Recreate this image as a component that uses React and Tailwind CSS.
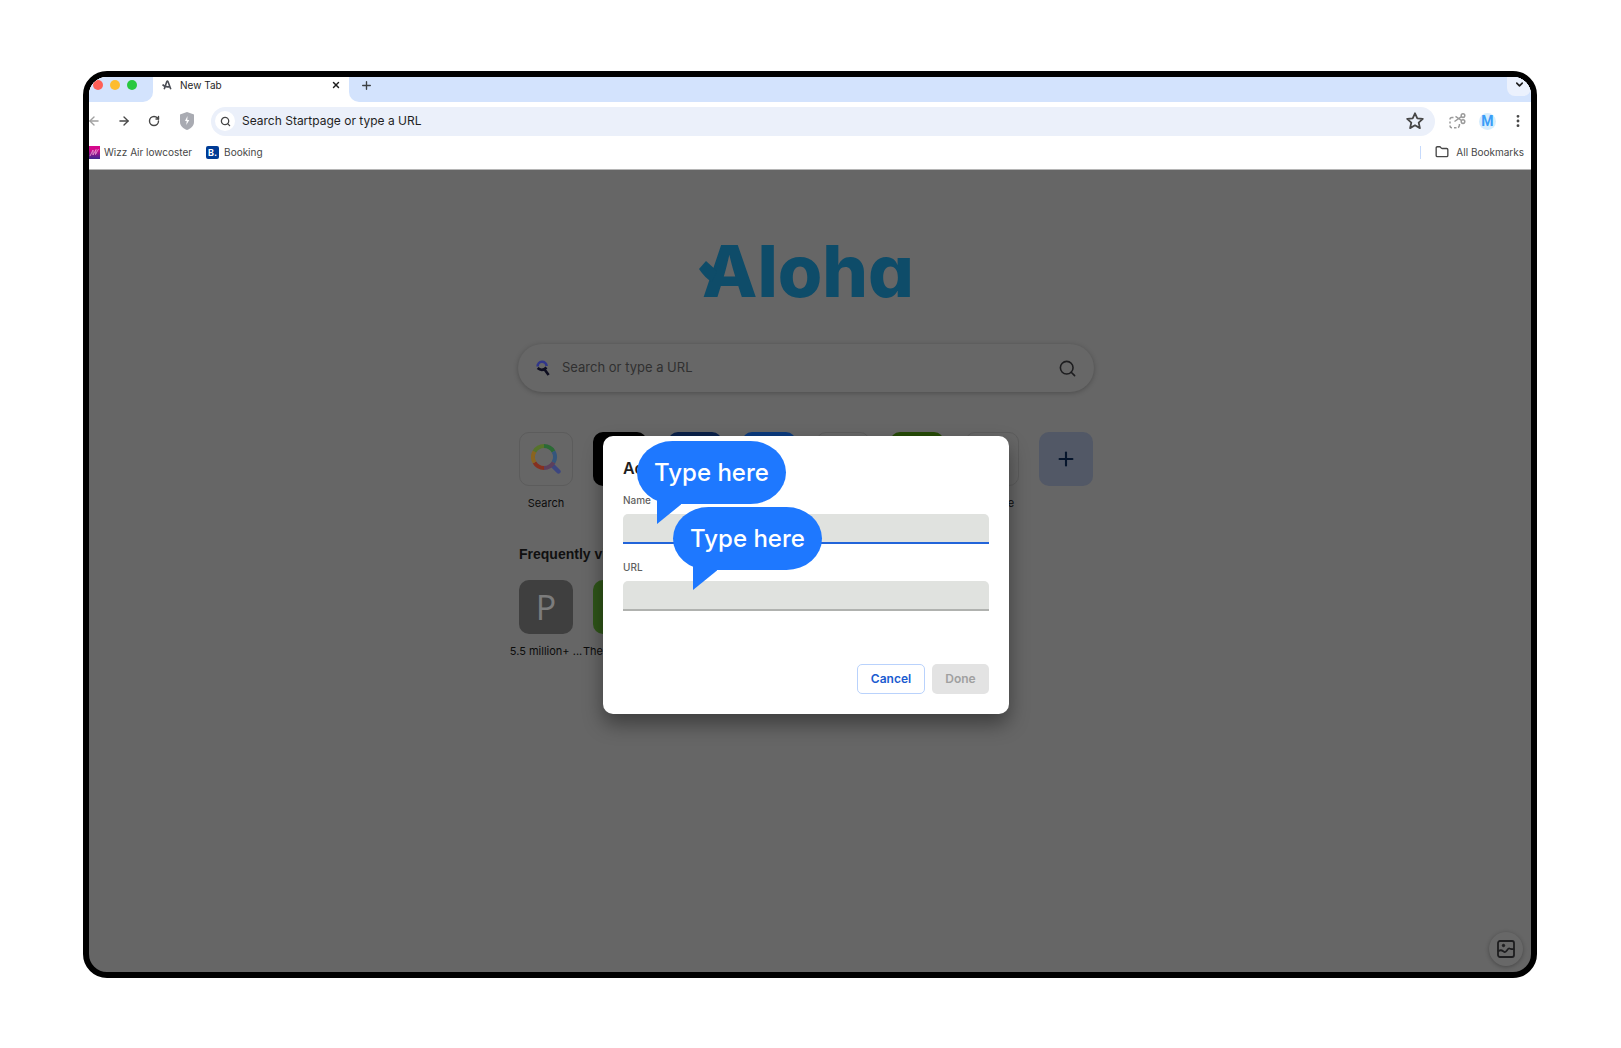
import React, { useState } from "react";
import {
  ArrowLeft,
  ArrowRight,
  ChevronDown,
  EllipsisVertical,
  Folder,
  Plus,
  RotateCw,
  Search,
  X,
} from "lucide-react";

const shortcuts = [
  { name: "Search", tile: "border border-[#5c5c5c]", icon: "search" },
  { name: "", tile: "bg-black" },
  { name: "", tile: "bg-[#0b2149]" },
  { name: "", tile: "bg-[#0b3a7d]" },
  { name: "", tile: "border border-[#5c5c5c]" },
  { name: "", tile: "bg-[#264a07]" },
  { name: "YouTube", tile: "border border-[#5c5c5c]", icon: "youtube" },
];

const frequent = [
  { name: "5.5 million+ ...", tile: "bg-[#3f3f3f]", letter: "P" },
  { name: "The", tile: "bg-[#2f5519]", wide: true },
];

const AlohaMark = () => (
  <svg viewBox="0 0 10 10" className="h-[10px] w-[10px]" fill="none" stroke="#4a4d55" strokeWidth="1.6">
    <path d="M2.200 9.300 4.800 1.600Q5.400.6 6 1.600L8.800 9.300" />
    <path d="M.6 4.600Q3 7.600 7.800 6.700" />
  </svg>
);

const ShieldIcon = () => (
  <svg viewBox="0 0 14 18" className="h-[18px] w-[14px]">
    <path d="M7 0 14 2.600V10C14 14 10.500 16.600 7 18 3.500 16.600 0 14 0 10V2.600Z" fill="#a9abb2" />
    <path d="M7.500 4 5 9H6.700L6.300 13 9.300 8H7.300Z" fill="#fff" />
  </svg>
);

const StarIcon = () => (
  <svg viewBox="0 0 18 18" className="h-[18px] w-[18px]" fill="none" stroke="#474747" strokeWidth="1.800" strokeLinejoin="round">
    <path d="M9 1.300 11.300 6.300 16.800 6.900 12.700 10.600 13.900 16.100 9 13.300 4.100 16.100 5.300 10.600 1.200 6.900 6.700 6.300Z" />
  </svg>
);

const SnipIcon = () => (
  <svg viewBox="0 0 17 16" className="h-4 w-[17px]" fill="none" stroke="#9b9b9b" strokeWidth="1.500">
    <path d="M4.500 4.500H3Q1 4.500 1 6.500M1 8.500V10.500M1 12.500Q1 14.800 3 14.800M5 14.800H7.500M9 14.500Q10.500 14 10.500 11" />
    <circle cx="14" cy="2.600" r="1.800" />
    <circle cx="14" cy="8.600" r="1.800" />
    <path d="M12.500 3.700 5.500 8.500M12.500 7.500 6.500 3.300" />
  </svg>
);

const WizzIcon = () => (
  <svg viewBox="0 0 13 13" className="h-[13px] w-[13px]">
    <defs>
      <linearGradient id="wizz" x1="0" y1="0" x2="0" y2="1">
        <stop offset="0.3" stopColor="#d4088b" />
        <stop offset="1" stopColor="#3a2791" />
      </linearGradient>
    </defs>
    <path d="M0 0H13V13H0Z" fill="url(#wizz)" />
    <path d="M3 10 6 4 6 9 9 3.500 8.500 8.500 11.500 3" fill="none" stroke="#e9a3d6" strokeWidth="0.800" />
  </svg>
);

const StartpageIcon = () => (
  <svg viewBox="0 0 14 16" className="h-4 w-[14px]" fill="none" strokeWidth="2.600">
    <path d="M1.600 6.500A4.300 4.300 0 0 1 10.600 6" stroke="#30368a" />
    <path d="M1.600 8Q6 11.800 10.500 7.500M8.600 9.600 12.600 15" stroke="#0e0e20" />
  </svg>
);

const RainbowSearch = () => (
  <svg viewBox="0 0 30 30" className="h-[30px] w-[30px]" fill="none" strokeWidth="4">
    <path d="M21 21 27.500 27.500" stroke="#3c4680" strokeWidth="4.400" strokeLinecap="round" />
    <path d="M13 2A11 11 0 0 1 22.500 7.500" stroke="#2b6a35" />
    <path d="M22.500 7.500A11 11 0 0 1 22.500 18.500" stroke="#34567c" />
    <path d="M22.500 18.500A11 11 0 0 1 13 24" stroke="#5c3f5c" />
    <path d="M13 24A11 11 0 0 1 3.500 18.500" stroke="#86301f" />
    <path d="M3.500 18.500A11 11 0 0 1 3.500 7.500" stroke="#8a6420" />
    <path d="M3.500 7.500A11 11 0 0 1 13 2" stroke="#56732a" />
  </svg>
);

const YoutubeIcon = () => (
  <svg viewBox="0 0 36 24" className="h-[22px] w-[33px]">
    <rect y="3" width="36" height="18" rx="5" fill="#7d1f1f" />
    <path d="M15 8 22 12 15 16Z" fill="#666" />
  </svg>
);

const ImageIcon = () => (
  <svg viewBox="0 0 18 18" className="h-[18px] w-[18px]" fill="none" stroke="#1d1d1f" strokeWidth="1.800">
    <rect x="1" y="1" width="16" height="16" rx="2" />
    <path d="M1 11.500C4 8.500 5.500 11 7.500 12S10.500 8 12.500 8.500 15 10 17 8.500" />
    <circle cx="6.500" cy="5.500" r="1.200" fill="#1d1d1f" strokeWidth="1" />
  </svg>
);

const Logo = () => (
  <h1 className="relative pl-1 text-[72px] leading-[72px] font-extrabold text-[#0e4c69] [font-feature-settings:'cv11']">
    <svg viewBox="0 0 20 24" className="absolute top-[26px] left-px h-6 w-5" fill="#0e4c69">
      <path d="M0 8 7 0 18 10 13 21Q6 17 0 8Z" />
    </svg>
    Aloha
  </h1>
);

const Tile = ({ item }) => (
  <a href="#" className="flex w-[54px] flex-col items-center">
    <span className={`flex h-[54px] w-[54px] items-center justify-center rounded-[10px] ${item.tile}`}>
      {item.icon === "search" && <RainbowSearch />}
      {item.icon === "youtube" && <YoutubeIcon />}
      {item.letter && (
        <span className="font-['Open_Sans',sans-serif] text-[34px] leading-none text-[#7c7c7c]">
          {item.letter}
        </span>
      )}
    </span>
    <span
      className={`mt-[9px] h-4 text-[11px] leading-4 whitespace-nowrap text-[#0c0c0c] ${item.wide ? "w-[74px]" : ""}`}
    >
      {item.name}
    </span>
  </a>
);

const Bubble = ({ className }) => (
  <div
    className={`pointer-events-none absolute flex h-[63px] w-[149px] items-center justify-center rounded-[36px/32px] bg-[#1e78ff] text-2xl font-medium text-white ${className}`}
  >
    <svg viewBox="0 0 26 30" className="absolute top-[53px] left-5 h-[30px] w-[26px]" fill="#1e78ff">
      <path d="M0 0V30L24 10.500V0Z" />
    </svg>
    <span className="relative">Type here</span>
  </div>
);

const BrowserBar = () => (
  <header className="border-b border-[#b5b5b5] bg-white">
    <div className="flex h-[25px] bg-white">
      <div className="flex w-[72px] gap-[7px] rounded-br-[10px] bg-[#d3e3fd] pt-[3px] pl-3">
        <span className="h-[10px] w-[10px] rounded-full bg-[#ff5f57]" />
        <span className="h-[10px] w-[10px] rounded-full bg-[#febc2e]" />
        <span className="h-[10px] w-[10px] rounded-full bg-[#28c840]" />
      </div>
      <div className="flex h-4 w-[196px] items-center pr-2 pl-[9px] text-[#1f1f1f]">
        <AlohaMark />
        <span className="ml-2 flex-1 text-[10px]">New Tab</span>
        <button aria-label="Close tab">
          <X size={10} strokeWidth={3.5} />
        </button>
      </div>
      <div className="flex flex-1 items-start justify-between rounded-bl-[10px] bg-[#d3e3fd] pl-[11px]">
        <button aria-label="New tab" className="mt-[2px] text-[#3c4043]">
          <Plus size={13} strokeWidth={2.5} />
        </button>
        <button
          aria-label="Search tabs"
          className="flex h-[19px] w-6 items-center justify-center rounded-b-lg bg-[#ebf1fd] pb-1 text-[#1f1f1f]"
        >
          <ChevronDown size={11} strokeWidth={3.5} />
        </button>
      </div>
    </div>
    <div className="flex h-[38px] items-center pr-[5px] pl-[6px] text-[#474747]">
      <button aria-label="Back" className="w-[30px] text-[#a0a0a0]">
        <ArrowLeft size={14} strokeWidth={2.3} />
      </button>
      <button aria-label="Forward" className="w-[31px]">
        <ArrowRight size={14} strokeWidth={2.3} />
      </button>
      <button aria-label="Reload" className="w-8">
        <RotateCw size={12} strokeWidth={2.8} />
      </button>
      <button aria-label="Shield">
        <ShieldIcon />
      </button>
      <div className="ml-[17px] flex h-[29px] flex-1 items-center rounded-full bg-[#ebf0fa] pr-[11px] pl-1">
        <span className="flex h-5 w-5 items-center justify-center rounded-full bg-white">
          <Search size={11} strokeWidth={2.8} />
        </span>
        <input
          type="text"
          aria-label="Address"
          placeholder="Search Startpage or type a URL"
          className="ml-[7px] flex-1 bg-transparent text-xs outline-none placeholder:text-[#1f1f1f]"
        />
        <button aria-label="Bookmark this page">
          <StarIcon />
        </button>
      </div>
      <button aria-label="Snip" className="ml-[14px]">
        <SnipIcon />
      </button>
      <button className="ml-[13px] h-[17px] w-[17px] rounded-full bg-[#d6edfd] font-['Roboto',sans-serif] text-sm leading-[17px] font-bold text-[#3a9df8]">
        M
      </button>
      <button aria-label="Menu" className="ml-[14px]">
        <EllipsisVertical size={16} strokeWidth={2.3} />
      </button>
    </div>
    <nav className="flex h-[29px] items-start pt-1 pr-[7px] pl-[6px] text-[10px] leading-4 text-[#474747]">
      <a href="#" className="flex items-center gap-1">
        <WizzIcon />
        Wizz Air lowcoster
      </a>
      <a href="#" className="ml-[14px] flex items-center gap-[5px]">
        <span className="h-[13px] w-[13px] rounded-[2px] bg-[#003b95] text-center text-[9px] leading-[13px] font-bold text-white">
          B.
        </span>
        Booking
      </a>
      <a href="#" className="ml-auto flex items-center">
        <span className="mr-[14px] h-[13px] w-px bg-[#c6dafc]" />
        <Folder size={14} strokeWidth={2.3} className="mr-[7px]" />
        All Bookmarks
      </a>
    </nav>
  </header>
);

const ShortcutDialog = () => {
  const [name, setName] = useState("");
  const [url, setUrl] = useState("");

  return (
    <form
      role="dialog"
      className="relative w-[406px] rounded-[10px] bg-white p-5 shadow-[0_10px_20px_rgba(0,0,0,0.4)]"
      onSubmit={(e) => e.preventDefault()}
    >
      <h2 className="text-base leading-6 font-semibold text-[#1f1f1f]">Add shortcut</h2>
      <label htmlFor="name" className="mt-[13px] block text-[10px] leading-[14px] font-medium text-[#5f5f5f]">
        Name
      </label>
      <input
        id="name"
        value={name}
        onChange={(e) => setName(e.target.value)}
        className="mt-[7px] block h-[30px] w-full rounded-t-[5px] border-b-2 border-[#2264d9] bg-[#e0e2df] px-2 text-xs outline-none"
      />
      <label htmlFor="url" className="mt-4 block text-[10px] leading-[14px] font-medium text-[#5f5f5f]">
        URL
      </label>
      <input
        id="url"
        value={url}
        onChange={(e) => setUrl(e.target.value)}
        className="mt-[7px] block h-[30px] w-full rounded-t-[5px] border-b-2 border-[#b0b2af] bg-[#e0e2df] px-2 text-xs outline-none"
      />
      <div className="mt-[53px] flex justify-end gap-[7px] text-xs font-semibold">
        <button type="button" className="h-[30px] w-[68px] rounded-[5px] border border-[#b9d2fc] text-[#1a5bd0]">
          Cancel
        </button>
        <button type="submit" className="h-[30px] w-[57px] rounded-[5px] bg-[#e3e3e3] text-[#a0a0a0]">
          Done
        </button>
      </div>
      <Bubble className="top-[5px] left-[34px]" />
      <Bubble className="top-[71px] left-[70px]" />
    </form>
  );
};

const App = () => {
  return (
    <main className="flex min-h-screen flex-col bg-white pt-[71px] pr-[84px] pb-[70px] pl-[83px] font-['Inter','Liberation_Sans',sans-serif]">
      <div className="flex flex-1 flex-col overflow-hidden rounded-3xl border-6 border-black bg-[#666]">
        <div className="-ml-2 flex flex-1 flex-col">
          <BrowserBar />
          <section className="relative flex flex-1 flex-col items-center pt-[65px]">
            <Logo />
            <div className="mt-[37px] flex h-12 w-[576px] items-center rounded-full bg-[#676767] pr-[17px] pl-[18px] shadow-[0_1px_5px_rgba(0,0,0,0.25)]">
              <StartpageIcon />
              <input
                type="text"
                aria-label="Search"
                placeholder="Search or type a URL"
                className="ml-3 flex-1 bg-transparent text-[13px] outline-none placeholder:text-[#303030]"
              />
              <button aria-label="Search" className="text-[#1d1d1f]">
                <Search size={19} strokeWidth={2} />
              </button>
            </div>
            <div className="mt-10 w-[574px]">
              <div className="flex justify-between">
                {shortcuts.map((item, index) => (
                  <Tile key={index} item={item} />
                ))}
                <button
                  aria-label="Add shortcut"
                  className="flex h-[54px] w-[54px] items-center justify-center rounded-[10px] bg-[#525866] text-[#06152c]"
                >
                  <Plus size={22} strokeWidth={2.3} />
                </button>
              </div>
              <h2 className="mt-[31px] font-['Liberation_Sans',sans-serif] text-sm leading-6 font-bold text-[#101010]">
                Frequently visited
              </h2>
              <div className="mt-[14px] flex gap-5">
                {frequent.map((item) => (
                  <Tile key={item.name} item={item} />
                ))}
              </div>
            </div>
            <button
              aria-label="Change background"
              className="absolute right-2 bottom-[6px] flex h-[34px] w-[34px] items-center justify-center rounded-full bg-[#686868] shadow-[0_1px_4px_rgba(0,0,0,0.3)]"
            >
              <ImageIcon />
            </button>
            <div className="absolute inset-x-0 top-0 flex justify-center pt-[266px]">
              <ShortcutDialog />
            </div>
          </section>
        </div>
      </div>
    </main>
  );
};

export default App;
